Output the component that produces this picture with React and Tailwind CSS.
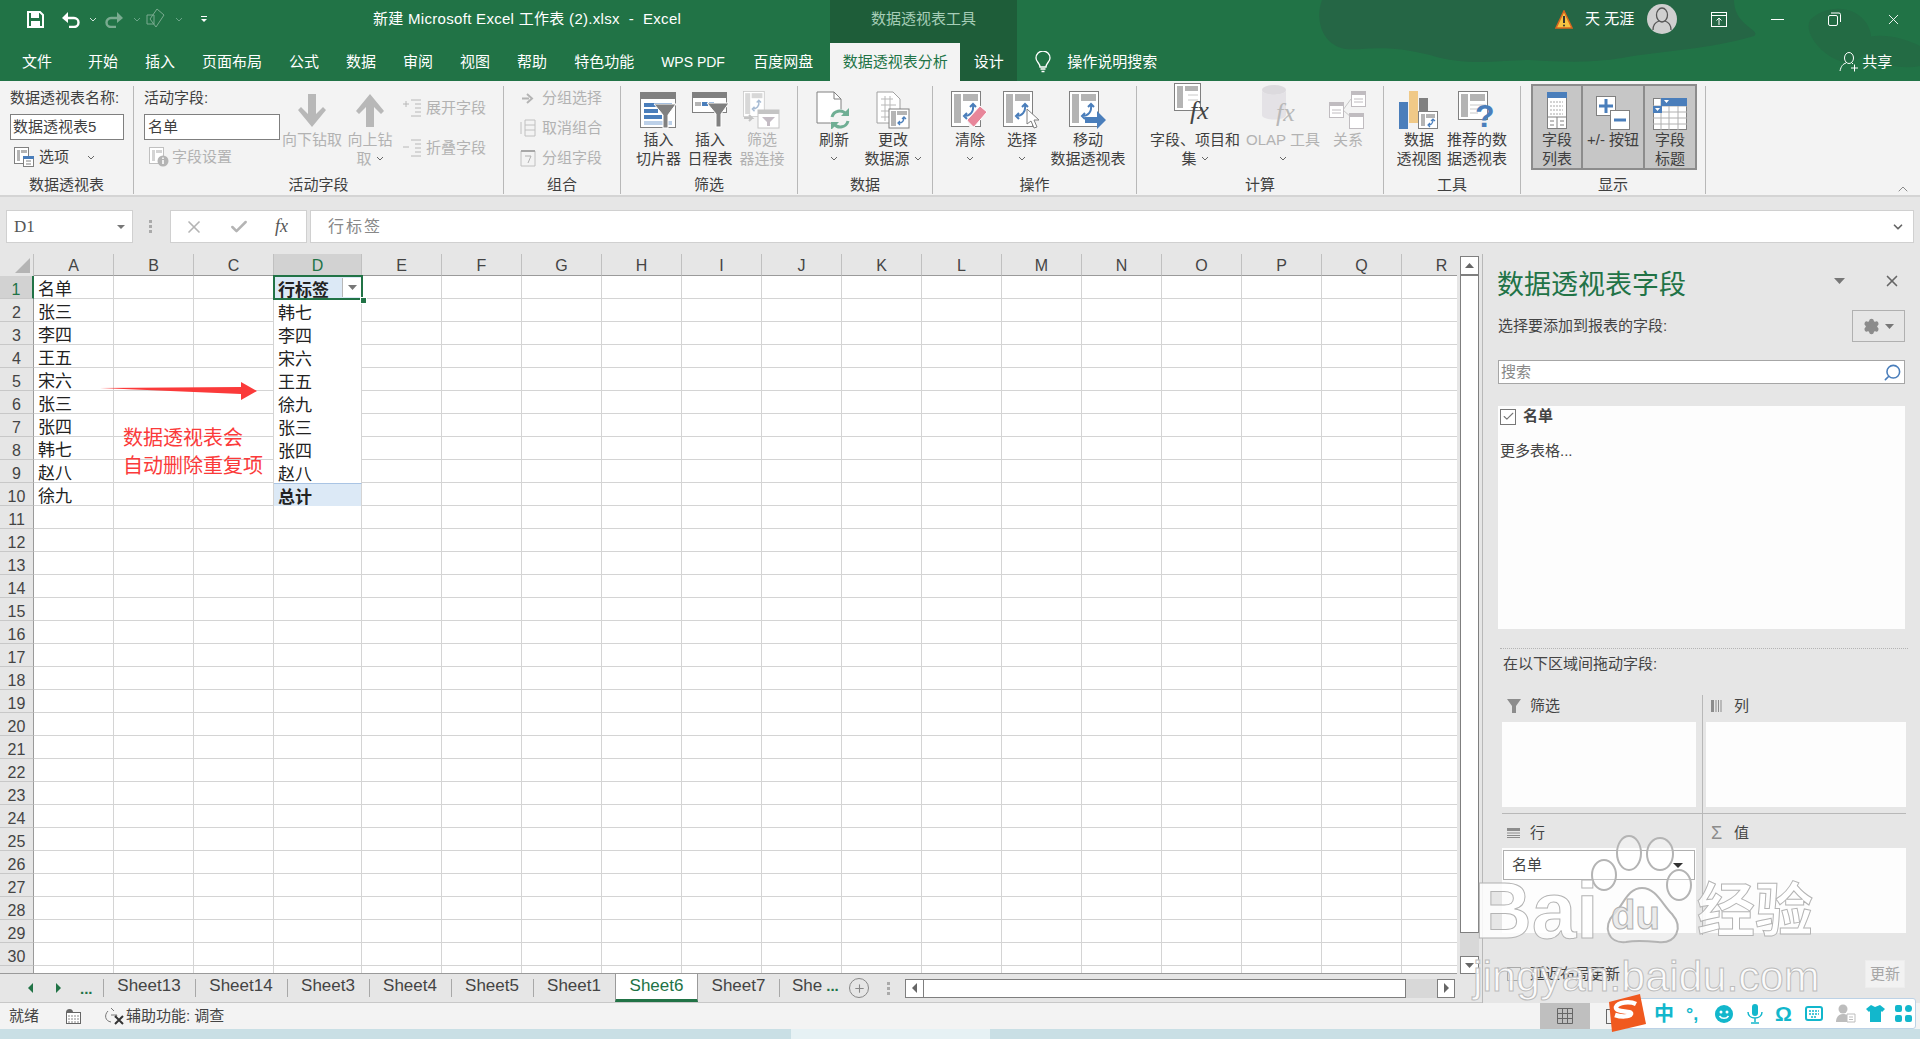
import React from 'react';
import { ChevronDown, ChevronUp, X, Check, Search, Settings, Plus } from 'lucide-react';

const Caret = ({ className = 'text-[#666]' }) => (
  <svg width="8" height="5" viewBox="0 0 8 5" className={className}>
    <path d="M1 1l3 3 3-3" fill="none" stroke="currentColor" strokeWidth="1" />
  </svg>
);

const Tri = ({ w = 10, h = 5, color = '#666' }) => (
  <svg width={w} height={h} viewBox="0 0 10 5" preserveAspectRatio="none">
    <path d="M0 0h10L5 5z" fill={color} />
  </svg>
);

// small pivot table sheet with blue arrows, used by several ribbon buttons
const PivotSheet = ({ dim }) => (
  <g>
    <rect x="0.5" y="0.5" width="29" height="35" fill="#fff" stroke={dim ? '#c4c4c4' : '#808080'} />
    <rect x="3" y="3" width="7" height="29" fill={dim ? '#d8d8d8' : '#b4b4b4'} />
    <rect x="12" y="3" width="15" height="7" fill={dim ? '#d8d8d8' : '#b4b4b4'} />
    <path d="M22 14c1 7-3 11-9 11M19 16l3-3 3 3M16 22l-3 3 3 3" fill="none" stroke={dim ? '#a8bcd4' : '#4a7ebb'} strokeWidth="2" />
  </g>
);

const Funnel = ({ x, y, color = '#808080' }) => (
  <path d={`M${x} ${y}h22l-8 11v13h-5v-13z`} fill={color} stroke="#fff" strokeWidth="1" />
);

const IconSlicer = () => (
  <svg width="37" height="37" viewBox="0 0 37 37">
    <rect x="0.5" y="0.5" width="35" height="35" fill="#fff" stroke="#808080" />
    <rect x="0" y="0" width="36" height="7" fill="#808080" />
    <rect x="4" y="11" width="28" height="4" fill="#4a7ebb" />
    <rect x="4" y="17" width="14" height="4" fill="#4a7ebb" />
    <rect x="4" y="23" width="18" height="4" fill="#4a7ebb" />
    <rect x="4" y="29" width="28" height="4" fill="#bcd0e8" />
    <Funnel x={14} y={12} />
  </svg>
);

const IconTimeline = () => (
  <svg width="37" height="37" viewBox="0 0 37 37">
    <rect x="0.5" y="0.5" width="34" height="20" fill="#fff" stroke="#808080" />
    <rect x="0" y="0" width="35" height="6" fill="#808080" />
    <rect x="3" y="10" width="6" height="4" fill="#b4b4b4" />
    <rect x="10" y="10" width="6" height="4" fill="#4a7ebb" />
    <rect x="17" y="10" width="5" height="4" fill="#4a7ebb" />
    <Funnel x={15} y={11} />
  </svg>
);

const IconConn = () => (
  <svg width="38" height="38" viewBox="0 0 38 38">
    <g transform="scale(.72)"><PivotSheet dim /></g>
    <rect x="15" y="19" width="21" height="18" fill="#fff" stroke="#c4c4c4" />
    <rect x="15" y="19" width="21" height="4" fill="#c4c4c4" />
    <path d="M19 26h13l-5 5v4h-3v-4z" fill="#c4bcc4" />
    <path d="M1 27h8l-3-3M9 27l-3 3" fill="none" stroke="#c4c4c4" strokeWidth="2" />
  </svg>
);

const IconRefresh = () => (
  <svg width="36" height="38" viewBox="0 0 36 38">
    <path d="M1 1h17l7 7v24H1z" fill="#fff" stroke="#808080" />
    <path d="M18 1v7h7" fill="none" stroke="#808080" />
    <circle cx="24" cy="28" r="10" fill="#f3f3f3" />
    <path d="M16 26a8 8 0 0 1 14-3M32 30a8 8 0 0 1-14 3" fill="none" stroke="#6fae94" strokeWidth="3" />
    <path d="M33 17v8h-8zM15 39v-8h8z" fill="#6fae94" />
  </svg>
);

const IconSource = () => (
  <svg width="34" height="38" viewBox="0 0 34 38">
    <path d="M1 1h16l7 7v24H1z" fill="#fff" stroke="#a0a0a0" />
    <path d="M5 8h12M5 14h15M5 20h15M5 26h15M9 5v25M14 5v25" stroke="#b8b8b8" fill="none" />
    <rect x="13" y="18" width="20" height="19" fill="#fff" stroke="#808080" />
    <rect x="15" y="20" width="5" height="15" fill="#b4b4b4" />
    <rect x="21" y="20" width="10" height="4" fill="#b4b4b4" />
    <path d="M28 26c0 4-2 6-5 6M26 28l2-2 2 2M24 30l-2 2 2 2" fill="none" stroke="#4a7ebb" strokeWidth="1.3" />
  </svg>
);

const IconClear = () => (
  <svg width="38" height="38" viewBox="0 0 38 38">
    <PivotSheet />
    <path d="M16 29l13-14 7 6-13 15h-4z" fill="#e8869a" stroke="#fff" />
    <path d="M16 29l7 7h-4z" fill="#f3f3f3" />
  </svg>
);

const IconSelect = () => (
  <svg width="38" height="38" viewBox="0 0 38 38">
    <PivotSheet />
    <path d="M24 18v15l4-3 3 7 3-1-3-7h5z" fill="#fff" stroke="#808080" />
  </svg>
);

const IconMove = () => (
  <svg width="38" height="38" viewBox="0 0 38 38">
    <PivotSheet />
    <path d="M16 26h12v-6l9 9-9 9v-6H16z" fill="#4a7ebb" />
  </svg>
);

const IconFx = () => (
  <svg width="42" height="46" viewBox="0 0 42 46">
    <rect x="0.5" y="0.5" width="26" height="27" fill="#fff" stroke="#808080" />
    <rect x="3" y="3" width="6" height="22" fill="#b4b4b4" />
    <rect x="11" y="3" width="13" height="5" fill="#b4b4b4" />
    <path d="M14 12h10M14 17h10" stroke="#c8c8c8" />
    <text x="16" y="36" fontFamily="'Liberation Serif',serif" fontStyle="italic" fontSize="26" fill="#444">fx</text>
  </svg>
);

const IconOlap = () => (
  <svg width="42" height="46" viewBox="0 0 42 46">
    <ellipse cx="12" cy="7" rx="12" ry="5" fill="#dcdade" />
    <path d="M0 7v25c0 6 24 6 24 0V7c0 6-24 6-24 0z" fill="#e4e2e6" />
    <text x="14" y="38" fontFamily="'Liberation Serif',serif" fontStyle="italic" fontSize="26" fill="#b8b8b8">fx</text>
  </svg>
);

const IconRel = () => (
  <svg width="38" height="38" viewBox="0 0 38 38">
    <path d="M14 19L22 8M14 19l9 8" stroke="#c8c8c8" fill="none" />
    <rect x="0.5" y="11.5" width="14" height="15" fill="#fff" stroke="#c0bcc0" />
    <rect x="0" y="11" width="15" height="4" fill="#c0bcc0" />
    <path d="M3 19h9M3 22h9" stroke="#c0bcc0" />
    <rect x="22.5" y="0.5" width="14" height="15" fill="#fff" stroke="#c0bcc0" />
    <rect x="22" y="0" width="15" height="4" fill="#c0bcc0" />
    <path d="M25 8h9M25 11h9" stroke="#c0bcc0" />
    <rect x="20.5" y="22.5" width="14" height="15" fill="#fff" stroke="#c0bcc0" />
    <rect x="20" y="22" width="15" height="4" fill="#c0bcc0" />
  </svg>
);

const IconChart = () => (
  <svg width="40" height="38" viewBox="0 0 40 38">
    <rect x="0" y="11" width="9" height="27" fill="#4a7ebb" />
    <rect x="10" y="0" width="9" height="32" fill="#f0c987" />
    <rect x="20" y="7" width="9" height="18" fill="#808080" />
    <rect x="19.5" y="20.5" width="19" height="17" fill="#fff" stroke="#808080" />
    <rect x="22" y="23" width="4" height="12" fill="#b4b4b4" />
    <rect x="27" y="23" width="9" height="4" fill="#b4b4b4" />
    <path d="M34 29c0 3-2 5-4 5M32 30l2-2 2 2M31 32l-2 2 2 2" fill="none" stroke="#4a7ebb" strokeWidth="1.2" />
  </svg>
);

const IconRec = () => (
  <svg width="38" height="38" viewBox="0 0 38 38">
    <rect x="0.5" y="0.5" width="29" height="28" fill="#fff" stroke="#808080" />
    <rect x="3" y="3" width="7" height="23" fill="#b4b4b4" />
    <rect x="12" y="3" width="15" height="7" fill="#b4b4b4" />
    <path d="M12 14h16M12 18h10M12 22h8" stroke="#c8c8c8" />
    <text x="17" y="36" fontFamily="'Liberation Sans',sans-serif" fontWeight="700" fontSize="32" fill="#4a7ebb">?</text>
  </svg>
);

const IconFieldList = () => (
  <svg width="20" height="38" viewBox="0 0 20 38">
    <rect x="0.5" y="0.5" width="19" height="36" fill="#fff" stroke="#808080" />
    <rect x="0" y="0" width="20" height="6" fill="#4a7ebb" />
    <path d="M3 10h13M3 14h13M3 18h13M3 22h13" stroke="#a8a8a8" strokeDasharray="2 1" />
    <path d="M0 25h20M10 25v12M3 29h4M3 33h4M13 29h4M13 33h4" stroke="#808080" />
  </svg>
);

const IconPlusMinus = () => (
  <svg width="34" height="34" viewBox="0 0 34 34">
    <rect x="0.5" y="0.5" width="19" height="19" fill="#fff" stroke="#808080" />
    <path d="M3 10h14M10 3v14" stroke="#4a7ebb" strokeWidth="3" />
    <rect x="14.5" y="14.5" width="19" height="19" fill="#fff" stroke="#808080" />
    <path d="M18 24h12" stroke="#4a7ebb" strokeWidth="3" />
  </svg>
);

const IconHeaders = () => (
  <svg width="34" height="32" viewBox="0 0 34 32">
    <rect x="0.5" y="0.5" width="33" height="31" fill="#fff" stroke="#808080" />
    <path d="M8 0v32M16 0v32M25 0v32M0 8h34M0 14h34M0 20h34M0 26h34" stroke="#b0b0b0" fill="none" />
    <rect x="8" y="0" width="26" height="8" fill="#4a7ebb" />
    <rect x="0" y="8" width="9" height="7" fill="#4a7ebb" />
    <path d="M11 2h5l-2.500 3zM2 10h5l-2.500 3z" fill="#fff" />
  </svg>
);

const RibbonBtn = ({ w, icon, lines, dim, caret, caretLine }) => (
  <div className={`${w} flex flex-col items-center ${dim ? 'text-[#b2b2b2]' : 'text-[#3f3f3f]'}`}>
    <div className="h-[44px] flex items-end justify-center shrink-0 pb-[1px]">{icon}</div>
    <div className="text-[15px] leading-[19px] text-center whitespace-nowrap">
      {lines.map((l, i) => (
        <div key={i} className="h-[19px] flex items-center justify-center gap-1">
          {l}
          {caret && i === lines.length - 1 && <Caret />}
        </div>
      ))}
      {caretLine && (
        <div className="h-[19px] flex items-center justify-center"><Caret /></div>
      )}
    </div>
  </div>
);

const Group = ({ w, label, children, className = '' }) => (
  <div className={`${w} my-[5px] h-[108px] border-r border-[#b8b8b8] flex flex-col shrink-0`}>
    <div className={`flex-1 flex ${className}`}>{children}</div>
    <div className="h-[20px] pt-[1px] text-center text-[15px] leading-[20px] text-[#3f3f3f]">{label}</div>
  </div>
);

const SmallRow = ({ icon, text, className = '' }) => (
  <div className={`flex items-center h-[20px] text-[15px] text-[#b2b2b2] ${className}`}>
    <span className="w-[29px] flex justify-center shrink-0">{icon}</span>
    {text}
  </div>
);

const tabs = ['开始', '插入', '页面布局', '公式', '数据', '审阅', '视图', '帮助', '特色功能'];

const TitleBar = () => (
  <div className="relative bg-[#217346] h-[81px] shrink-0 overflow-hidden text-white">
    <svg className="absolute left-0 top-0" width="1920" height="81" viewBox="0 0 1920 81">
      <path d="M1322 0c-8 22 2 46 24 49 18 2 36-6 84 6 38 12 72 5 100 5 34 2 60 3 92-2 44-8 84-8 132-22 8-6-20-10-20-36z" fill="#256645" />
      <path d="M1810 20c14-14 40-16 54 0 14 16 6 38-14 42-20 2-48-26-40-42zM1860 40c16-8 40-4 60 6v20c-30 6-72-12-60-26z" fill="#236b44" />
    </svg>
    <div className="relative flex h-[43px] items-center pb-[5px]">
      <div className="w-[373px] flex items-center shrink-0">
        <svg className="ml-[27px]" width="17" height="17" viewBox="0 0 17 17">
          <path d="M1 1h12l3 3v12H1z" fill="none" stroke="#fff" strokeWidth="2" />
          <rect x="4" y="1" width="8" height="6" fill="#fff" />
          <rect x="4" y="10" width="9" height="6" fill="#fff" />
        </svg>
        <svg className="ml-[17px]" width="19" height="17" viewBox="0 0 19 17">
          <path d="M6 7h7a4.500 4.500 0 0 1 0 9H8" fill="none" stroke="#fff" strokeWidth="2.400" />
          <path d="M7 1v11L1 7z" fill="#fff" />
        </svg>
        <Caret className="ml-[9px] text-[#cfe3d8]" />
        <svg className="ml-[8px] opacity-40" width="19" height="17" viewBox="0 0 19 17">
          <path d="M13 7H6a4.500 4.500 0 0 0 0 9h5" fill="none" stroke="#fff" strokeWidth="2.400" />
          <path d="M12 1v11l6-5z" fill="#fff" />
        </svg>
        <Caret className="ml-[9px] text-[#6aa588]" />
        <svg className="ml-[5px] opacity-40" width="20" height="24" viewBox="0 0 20 24">
          <path d="M1 8h7v9H1zM11 2l7 6-8 12-6-8z" fill="none" stroke="#fff" />
        </svg>
        <Caret className="ml-[9px] text-[#6aa588]" />
        <span className="ml-[18px] flex flex-col items-center gap-[2px]">
          <span className="w-[6px] h-px bg-white" />
          <Tri w={6} h={3} color="#fff" />
        </span>
      </div>
      <div className="w-[457px] text-[15px] tracking-[0.3px] whitespace-pre shrink-0">新建 Microsoft Excel 工作表 (2).xlsx  -  Excel</div>
      <div className="w-[187px] self-stretch -mb-[5px] pb-[5px] bg-[#1e5d39] flex items-center justify-center text-[15px] text-[#a6cdb7] shrink-0">数据透视表工具</div>
      <svg className="ml-[538px]" width="18" height="19" viewBox="0 0 18 19">
        <path d="M9 1l8 17H1z" fill="#f6c342" stroke="#d9661f" strokeWidth="1.500" />
        <path d="M9 6v7" stroke="#333" strokeWidth="2" />
        <circle cx="9" cy="15.500" r="1" fill="#333" />
      </svg>
      <span className="ml-[12px] text-[15px] whitespace-pre">天 无涯</span>
      <span className="ml-[13px] w-[30px] h-[30px] rounded-full bg-[#cfcfcf] flex items-center justify-center overflow-hidden">
        <svg width="22" height="24" viewBox="0 0 22 24">
          <ellipse cx="11" cy="8" rx="5.500" ry="7" fill="none" stroke="#555" strokeWidth="1.300" />
          <path d="M2 23c0-6 3-8 6-9M20 23c0-6-3-8-6-9" fill="none" stroke="#555" strokeWidth="1.300" />
        </svg>
      </span>
      <svg className="ml-[34px]" width="16" height="15" viewBox="0 0 16 15">
        <rect x="0.500" y="0.500" width="15" height="14" fill="none" stroke="#fff" />
        <path d="M0 3.500h16M8 13V6M5.500 8.500L8 6l2.500 2.500" fill="none" stroke="#fff" />
      </svg>
      <span className="ml-[44px] w-[13px] h-px bg-white" />
      <svg className="ml-[44px]" width="13" height="14" viewBox="0 0 13 14">
        <rect x="0.500" y="3.500" width="9" height="10" rx="1.500" fill="none" stroke="#fff" />
        <path d="M3 1h8a1.500 1.500 0 0 1 1.500 1.500V10" fill="none" stroke="#fff" />
      </svg>
      <X className="ml-[44px]" size={17} strokeWidth={1.3} />
    </div>
    <div className="relative flex h-[38px] items-stretch text-[15px]">
      <div className="ml-[22px] w-[30px] flex items-center mr-[36px]">文件</div>
      <div className="flex items-center gap-[27px] whitespace-nowrap">
        {tabs.map(t => <span key={t}>{t}</span>)}
        <span className="w-[65px] text-[14px]">WPS PDF</span>
        <span>百度网盘</span>
      </div>
      <div className="ml-[17px] w-[130px] bg-[#f3f3f3] text-[#217346] flex items-center justify-center">数据透视表分析</div>
      <div className="w-[57px] bg-[#1e5d39] flex items-center justify-center">设计</div>
      <svg className="ml-[18px] self-center" width="16" height="22" viewBox="0 0 16 22">
        <path d="M5 16c0-4-4-5-4-9a7 7 0 0 1 14 0c0 4-4 5-4 9z" fill="none" stroke="#fff" strokeWidth="1.300" />
        <path d="M5.500 18h5M6.500 20.500h3" stroke="#fff" strokeWidth="1.300" />
      </svg>
      <span className="ml-[16px] self-center">操作说明搜索</span>
      <svg className="ml-[682px] self-center" width="20" height="20" viewBox="0 0 20 20">
        <ellipse cx="10" cy="6" rx="4.500" ry="5.500" fill="none" stroke="#fff" />
        <path d="M1 19c1-5 3-7 6-8M13 11l1 1M12 16h7M15.500 12.500v7" fill="none" stroke="#fff" />
      </svg>
      <span className="ml-[3px] self-center">共享</span>
    </div>
  </div>
);

const Ribbon = () => (
  <div className="relative h-[116px] bg-[#f3f3f3] flex shrink-0 border-b-2 border-[#d4d4d4]">
    <Group w="w-[134px]" label="数据透视表">
      <div className="pl-[10px] text-[15px] text-[#3f3f3f] flex flex-col">
        <div className="h-[28px] leading-[24px] whitespace-nowrap">数据透视表名称:</div>
        <div className="w-[114px] h-[26px] border border-[#7f7f7f] bg-white pl-[2px] leading-[24px] whitespace-nowrap">数据透视表5</div>
        <div className="flex items-center mt-[7px] h-[20px]">
          <svg className="ml-[4px]" width="20" height="20" viewBox="0 0 20 20">
            <rect x="0.500" y="0.500" width="14" height="16" fill="#fff" stroke="#808080" />
            <rect x="3" y="3" width="3" height="11" fill="#b4b4b4" /><rect x="7" y="3" width="6" height="3" fill="#b4b4b4" />
            <rect x="9.500" y="9.500" width="10" height="10" fill="#fff" stroke="#808080" />
            <rect x="9" y="9" width="11" height="3" fill="#4a7ebb" />
            <path d="M12 14h5M12 17h5" stroke="#808080" />
          </svg>
          <span className="ml-[5px]">选项</span>
          <Caret className="ml-[18px] text-[#666]" />
        </div>
      </div>
    </Group>
    <Group w="w-[370px]" label="活动字段">
      <div className="pl-[10px] w-[148px] text-[15px] text-[#3f3f3f] flex flex-col shrink-0">
        <div className="h-[28px] leading-[24px]">活动字段:</div>
        <div className="w-[136px] h-[26px] border border-[#7f7f7f] bg-white pl-[3px] leading-[24px]">名单</div>
        <div className="flex items-center mt-[7px] h-[20px] text-[#b2b2b2]">
          <svg className="ml-[5px]" width="20" height="20" viewBox="0 0 20 20">
            <rect x="0.500" y="0.500" width="14" height="16" fill="#fff" stroke="#c0c0c0" />
            <rect x="3" y="3" width="3" height="11" fill="#d4d4d4" /><rect x="7" y="3" width="6" height="3" fill="#d4d4d4" />
            <circle cx="14" cy="14" r="5.500" fill="#b4b4b4" />
            <path d="M14 10.500v1.500M14 13v4" stroke="#fff" strokeWidth="1.500" />
          </svg>
          <span className="ml-[3px] whitespace-nowrap">字段设置</span>
        </div>
      </div>
      <RibbonBtn w="w-[60px]" dim lines={['向下钻取']} icon={
        <svg className="mb-[2px]" width="28" height="33" viewBox="0 0 28 33"><path d="M10 0h8v20l7-7 3 3-14 17L0 16l3-3 7 7z" fill="#b8b8b8" /></svg>
      } />
      <RibbonBtn w="w-[56px]" dim lines={['向上钻', '取']} caret icon={
        <svg className="mb-[2px]" width="28" height="33" viewBox="0 0 28 33"><path d="M10 33h8V13l7 7 3-3L14 0 0 17l3 3 7-7z" fill="#b8b8b8" /></svg>
      } />
      <div className="pl-[5px] pt-[12px] flex flex-col gap-[20px] text-[15px] text-[#b2b2b2]">
        <div className="flex items-center h-[20px] gap-[5px] whitespace-nowrap">
          <svg width="18" height="18" viewBox="0 0 18 18"><path d="M0 5h6M3 2v6M8 1h10M12 5h6M12 9h6M12 13h6M8 17h10" stroke="#b8b8b8" fill="none" /></svg>
          展开字段
        </div>
        <div className="flex items-center h-[20px] gap-[5px] whitespace-nowrap">
          <svg width="18" height="18" viewBox="0 0 18 18"><path d="M0 8h6M8 1h10M12 5h6M12 9h6M12 13h6M8 17h10" stroke="#b8b8b8" fill="none" /></svg>
          折叠字段
        </div>
      </div>
    </Group>
    <Group w="w-[117px]" label="组合">
      <div className="pl-[9px] pt-[2px] flex flex-col gap-[10px]">
        <SmallRow text="分组选择" icon={
          <svg width="12" height="11" viewBox="0 0 12 11"><path d="M0 5.500h7M5 1l5 4.500-5 4.500" fill="none" stroke="#b4b4b4" strokeWidth="2" /></svg>
        } />
        <SmallRow text="取消组合" icon={
          <svg width="16" height="18" viewBox="0 0 16 18"><path d="M1 3v12M5 1h10v16H5zM5 6h10M5 11h10" fill="none" stroke="#c0c0c0" /></svg>
        } />
        <SmallRow text="分组字段" icon={
          <svg width="16" height="18" viewBox="0 0 16 18"><path d="M1 2h14v15H1z" fill="none" stroke="#c0c0c0" /><path d="M1 2h14" stroke="#a8a8a8" strokeWidth="2" /><path d="M5 7h6l-3 7" fill="none" stroke="#b0b0b0" /></svg>
        } />
      </div>
    </Group>
    <Group w="w-[177px]" label="筛选" className="pl-[12px]">
      <RibbonBtn w="w-[51px]" lines={['插入', '切片器']} icon={<IconSlicer />} />
      <RibbonBtn w="w-[52px]" lines={['插入', '日程表']} icon={<IconTimeline />} />
      <RibbonBtn w="w-[52px]" dim lines={['筛选', '器连接']} icon={<IconConn />} />
    </Group>
    <Group w="w-[135px]" label="数据" className="pl-[12px]">
      <RibbonBtn w="w-[48px]" lines={['刷新']} caretLine icon={<IconRefresh />} />
      <RibbonBtn w="w-[70px]" lines={['更改', '数据源']} caret icon={<IconSource />} />
    </Group>
    <Group w="w-[204px]" label="操作" className="pl-[12px]">
      <RibbonBtn w="w-[50px]" lines={['清除']} caretLine icon={<IconClear />} />
      <RibbonBtn w="w-[54px]" lines={['选择']} caretLine icon={<IconSelect />} />
      <RibbonBtn w="w-[78px]" lines={['移动', '数据透视表']} icon={<IconMove />} />
    </Group>
    <Group w="w-[247px]" label="计算" className="pl-[8px]">
      <RibbonBtn w="w-[100px]" lines={['字段、项目和', '集']} caret icon={<IconFx />} />
      <RibbonBtn w="w-[76px]" dim lines={['OLAP 工具']} caretLine icon={<IconOlap />} />
      <RibbonBtn w="w-[54px]" dim lines={['关系']} icon={<IconRel />} />
    </Group>
    <Group w="w-[137px]" label="工具" className="pl-[8px]">
      <RibbonBtn w="w-[54px]" lines={['数据', '透视图']} icon={<IconChart />} />
      <RibbonBtn w="w-[62px]" lines={['推荐的数', '据透视表']} icon={<IconRec />} />
    </Group>
    <Group w="w-[185px]" label="显示">
      <div className="ml-[10px] -mt-[2px] h-[86px] flex border-2 border-[#8c8c8c] bg-[#c6c6c6] text-[#3f3f3f] text-[15px] leading-[19px]">
        <div className="w-[50px] border-r-2 border-[#8c8c8c] flex flex-col items-center">
          <div className="h-[44px] flex items-end"><IconFieldList /></div>
          <div className="text-center">字段<br />列表</div>
        </div>
        <div className="w-[62px] border-r-2 border-[#8c8c8c] flex flex-col items-center">
          <div className="h-[44px] flex items-end"><IconPlusMinus /></div>
          <div className="whitespace-nowrap">+/- 按钮</div>
        </div>
        <div className="w-[50px] flex flex-col items-center">
          <div className="h-[44px] flex items-end"><IconHeaders /></div>
          <div className="text-center">字段<br />标题</div>
        </div>
      </div>
    </Group>
    <ChevronUp className="absolute left-[1895px] top-[100px] text-[#555]" size={16} strokeWidth={1} />
  </div>
);

const FormulaBar = () => (
  <div className="h-[57px] bg-[#e6e6e6] flex items-start pt-[13px] shrink-0">
    <div className="ml-[6px] w-[127px] h-[33px] bg-white border border-[#d0d0d0] flex items-center justify-between px-[7px]">
      <span className="font-['Liberation_Serif',serif] text-[17px] text-[#555]">D1</span>
      <Tri w={8} h={4} color="#777" />
    </div>
    <div className="ml-[16px] w-[4px] h-[33px] flex flex-col justify-center gap-[2px]">
      <span className="w-[3px] h-[3px] bg-[#aaa]" /><span className="w-[3px] h-[3px] bg-[#aaa]" /><span className="w-[3px] h-[3px] bg-[#aaa]" />
    </div>
    <div className="ml-[17px] w-[137px] h-[33px] bg-white border border-[#d0d0d0] flex items-center">
      <X className="ml-[13px] text-[#b4b4b4]" size={20} strokeWidth={2} />
      <Check className="ml-[25px] text-[#b4b4b4]" size={20} strokeWidth={3} />
      <span className="ml-[26px] font-['Liberation_Serif',serif] italic text-[18px] text-[#555]">fx</span>
    </div>
    <div className="ml-[3px] w-[1604px] h-[33px] bg-white border border-[#d0d0d0] flex items-center justify-between pl-[17px] pr-[8px]">
      <span className="text-[16px] tracking-[2px] text-[#888]">行标签</span>
      <ChevronDown className="text-[#666]" size={14} strokeWidth={3} />
    </div>
  </div>
);

const colsList = 'ABCDEFGHIJKLMNOPQR'.split('');
const colA = ['名单', '张三', '李四', '王五', '宋六', '张三', '张四', '韩七', '赵八', '徐九'];
const colD = ['行标签', '韩七', '李四', '宋六', '王五', '徐九', '张三', '张四', '赵八', '总计'];
const rowNums = Array.from({ length: 31 }, (_, i) => i + 1);

const Sheet = () => (
  <div className="relative w-[1457px] h-[720px] overflow-hidden border-b border-[#9a9a9a] bg-white">
    <div className="flex h-[22px] bg-[#e6e6e6] text-[16px] text-[#444]">
      <div className="w-[34px] shrink-0 border-r border-[#c0c0c0] relative">
        <svg className="absolute right-[3px] bottom-[3px]" width="15" height="15" viewBox="0 0 15 15"><path d="M15 0v15H0z" fill="#b4b4b4" /></svg>
      </div>
      {colsList.map(c => (
        <div key={c} className={`${c === 'D' ? 'w-[88px] bg-[#d2d2d2] text-[#217346]' : 'w-[80px]'} shrink-0 border-r border-[#c0c0c0] border-b border-b-[#9a9a9a] pt-[2px] flex items-center justify-center`}>{c}</div>
      ))}
    </div>
    {rowNums.map(r => (
      <div key={r} className="flex h-[23px] text-[17px] text-[#222]">
        <div className={`w-[34px] shrink-0 flex items-center justify-center text-[16px] pt-[5px] border-b ${r === 1 ? 'bg-[#d2d2d2] text-[#217346] border-r-2 border-r-[#217346] border-b-[#c8c8c8]' : 'bg-[#e6e6e6] text-[#444] border-r border-r-[#9a9a9a] border-b-[#c8c8c8]'}`}>{r}</div>
        {colsList.map(c => {
          if (c === 'D') {
            const v = colD[r - 1];
            if (r === 1) {
              return (
                <div key={c} className="w-[88px] shrink-0 bg-[#dce9f6] flex items-center pl-[4px] pt-[6px] font-semibold relative">
                  {v}
                  <span className="absolute left-[68px] top-[2px] w-[19px] h-[19px] bg-white border-l border-[#b8b8b8] flex items-center justify-center"><Tri w={9} h={5} color="#777" /></span>
                </div>
              );
            }
            if (r === 10) {
              return <div key={c} className="w-[88px] shrink-0 bg-[#dce9f6] border-t border-t-[#a9c4e4] border-r border-r-[#d4d4d4] flex items-center pl-[4px] pt-[5px] font-bold">{v}</div>;
            }
            return (
              <div key={c} className={`w-[88px] shrink-0 border-r border-[#d4d4d4] flex items-center pl-[4px] pt-[6px] ${r > 10 ? 'border-b' : ''}`}>{v}</div>
            );
          }
          return (
            <div key={c} className="w-[80px] shrink-0 border-r border-b border-[#d4d4d4] flex items-center pl-[4px] pt-[6px]">
              {c === 'A' ? colA[r - 1] : ''}
            </div>
          );
        })}
      </div>
    ))}
    {/* selected cell */}
    <div className="absolute left-[273px] top-[21px] w-[90px] h-[25px] border-2 border-[#217346]" />
    <div className="absolute left-[360px] top-[43px] w-[5px] h-[5px] bg-[#217346] border border-white box-content" />
    {/* annotation */}
    <svg className="absolute left-0 top-0" width="300" height="160" viewBox="0 0 300 160">
      <path d="M100 134l141-1v-5l16 9-16 9v-6z" fill="#fb3a3a" />
    </svg>
    <div className="absolute left-[123px] top-[170px] text-[20px] leading-[28px] text-[#fb3a3a] whitespace-nowrap">数据透视表会<br />自动删除重复项</div>
  </div>
);

const VScroll = () => (
  <div className="ml-[3px] w-[19px] h-[720px] flex flex-col">
    <div className="mt-[2px] h-[20px] bg-white border border-[#7f7f7f] border-b-2 flex items-center justify-center"><span className="rotate-180 flex"><Tri w={9} h={5} /></span></div>
    <div className="h-[657px] bg-white border-x border-b border-[#7f7f7f]" />
    <div className="h-[23px] bg-[#d8d8d8]" />
    <div className="h-[18px] bg-white border border-[#7f7f7f] flex items-center justify-center"><Tri w={9} h={5} /></div>
  </div>
);

const sheetTabs = [
  ['Sheet13', 'w-[92px]'], ['Sheet14', 'w-[92px]'], ['Sheet3', 'w-[82px]'], ['Sheet4', 'w-[82px]'],
  ['Sheet5', 'w-[82px]'], ['Sheet1', 'w-[82px]'],
];

const SheetTabs = () => (
  <div className="h-[29px] bg-[#e6e6e6] flex items-stretch text-[17px] text-[#444] border-b border-[#c8c8c8]">
    <div className="w-[103px] shrink-0 flex items-center relative">
      <span className="ml-[28px] w-0 h-0 border-y-[5px] border-y-transparent border-r-[5px] border-r-[#217346]" />
      <span className="ml-[23px] w-0 h-0 border-y-[5px] border-y-transparent border-l-[5px] border-l-[#217346]" />
      <span className="ml-[19px] text-[#217346] text-[15px] font-bold leading-none">...</span>
    </div>
    {sheetTabs.map(([t, w]) => (
      <div key={t} className={`${w} shrink-0 flex items-center justify-center relative pb-[5px]`}>
        <span className="absolute left-0 top-[5px] h-[18px] w-px bg-[#a8a8a8]" />
        {t}
      </div>
    ))}
    <div className="w-[83px] shrink-0 bg-white border-x border-[#9a9a9a] border-b-[3px] border-b-[#217346] text-[#217346] pb-[2px] flex items-center justify-center">Sheet6</div>
    <div className="w-[81px] shrink-0 flex items-center justify-center pb-[5px]">Sheet7</div>
    <div className="w-[60px] shrink-0 flex items-center relative pl-[13px] pb-[5px] whitespace-nowrap">
      <span className="absolute left-0 top-[5px] h-[18px] w-px bg-[#a8a8a8]" />
      She
      <span className="ml-[4px] text-[#217346] text-[15px] font-bold leading-none">...</span>
    </div>
    <div className="ml-[10px] self-center w-[20px] h-[20px] rounded-full border border-[#888] flex items-center justify-center shrink-0"><Plus size={13} className="text-[#888]" /></div>
    <div className="ml-[18px] w-[4px] self-center flex flex-col gap-[2px]">
      <span className="w-[3px] h-[3px] bg-[#aaa]" /><span className="w-[3px] h-[3px] bg-[#aaa]" /><span className="w-[3px] h-[3px] bg-[#aaa]" />
    </div>
    <div className="ml-[14px] self-center flex h-[19px] w-[550px] shrink-0">
      <div className="w-[19px] bg-white border border-[#7f7f7f] flex items-center justify-center">
        <span className="w-0 h-0 border-y-[5px] border-y-transparent border-r-[5px] border-r-[#666]" />
      </div>
      <div className="w-[482px] bg-white border-y border-r border-[#7f7f7f]" />
      <div className="w-[31px] bg-[#d8d8d8]" />
      <div className="w-[18px] bg-white border border-[#7f7f7f] flex items-center justify-center">
        <span className="w-0 h-0 border-y-[5px] border-y-transparent border-l-[5px] border-l-[#666]" />
      </div>
    </div>
  </div>
);

const AreaHead = ({ icon, text, className = '' }) => (
  <div className={`h-[24px] flex items-center text-[15px] text-[#444] ${className}`}>
    <span className="w-[28px] flex justify-start pl-[5px] shrink-0">{icon}</span>{text}
  </div>
);

const FieldPanel = () => (
  <div className="w-[438px] h-[749px] bg-[#e6e6e6] border-l border-[#b8b8b8] text-[#444] pl-[15px] flex flex-col shrink-0 -ml-[1px]">
    <div className="h-[16px] shrink-0" />
    <div className="flex items-center h-[30px]">
      <span className="w-[337px] -ml-[1px] text-[27px] leading-[30px] text-[#217346]">数据透视表字段</span>
      <span className="flex -mt-[8px]"><Tri w={11} h={6} color="#777" /></span>
      <X className="ml-[38px] -mt-[8px] text-[#666]" size={18} strokeWidth={2.2} />
    </div>
    <div className="flex items-center h-[32px] mt-[10px] w-[407px] justify-between text-[15px]">
      <span>选择要添加到报表的字段:</span>
      <div className="w-[53px] h-[32px] border border-[#b0b0b0] flex items-center justify-center gap-[5px]">
        <Settings size={17} className="text-[#8c8c8c] fill-[#8c8c8c]" />
        <Tri w={9} h={5} color="#777" />
      </div>
    </div>
    <div className="mt-[18px] w-[407px] h-[24px] bg-white border border-[#a6a6a6] flex items-center justify-between px-[2px] text-[15px] text-[#888]">
      搜索
      <Search size={19} strokeWidth={2} className="text-[#4a7ebb] -scale-x-100" />
    </div>
    <div className="mt-[22px] w-[407px] h-[223px] bg-[#fdfdfd] px-[2px] text-[15px]">
      <div className="flex items-center h-[19px] mt-[1px] font-semibold text-[#444]">
        <span className="w-[16px] h-[16px] border border-[#777] bg-white flex items-center justify-center"><Check size={13} className="text-[#777]" /></span>
        <span className="ml-[7px]">名单</span>
      </div>
      <div className="mt-[14px] leading-[22px]">更多表格...</div>
    </div>
    <div className="mt-[19px] w-[408px] ml-[2px] border-t border-dotted border-[#b4b4b4]" />
    <div className="ml-[5px] mt-[5px] h-[20px] text-[15px] leading-[20px]">在以下区域间拖动字段:</div>
    <div className="mt-[21px] ml-[4px] w-[404px] grid grid-cols-[201px_203px] grid-rows-[119px_121px]">
      <div className="border-r border-b border-[#b8b8b8] pr-[6px]">
        <AreaHead text="筛选" icon={<svg width="14" height="14" viewBox="0 0 14 14"><path d="M0 0h14L9 7v7H5V7z" fill="#8c8c8c" /></svg>} className="mt-[-1px]" />
        <div className="mt-[4px] h-[85px] bg-[#fdfdfd]" />
      </div>
      <div className="border-b border-[#b8b8b8] pl-[3px]">
        <AreaHead text="列" icon={<svg width="11" height="12" viewBox="0 0 11 12"><path d="M0 0h3v12H0zM4.500 0h1v12h-1zM7 0h1v12H7zM9.500 0h1v12h-1z" fill="#8c8c8c" /></svg>} className="mt-[-1px]" />
        <div className="mt-[4px] h-[85px] bg-[#fdfdfd]" />
      </div>
      <div className="border-r border-[#b8b8b8] pr-[6px]">
        <AreaHead text="行" icon={<svg width="13" height="10" viewBox="0 0 13 10"><path d="M0 0h13v3H0zM0 4.500h13v1H0zM0 7h13v1H0zM0 9h13v1H0z" fill="#8c8c8c" /></svg>} className="mt-[7px]" />
        <div className="mt-[3px] h-[85px] bg-[#fdfdfd] pt-[2px]">
          <div className="mx-[1px] h-[30px] bg-white border border-[#b0b0b0] flex items-center justify-between pl-[8px] pr-[11px] text-[15px]">
            名单<Tri w={10} h={5} color="#333" />
          </div>
        </div>
      </div>
      <div className="pl-[3px]">
        <AreaHead text="值" icon={<span className="text-[18px] leading-none text-[#8c8c8c]">Σ</span>} className="mt-[7px]" />
        <div className="mt-[3px] h-[85px] bg-[#fdfdfd]" />
      </div>
    </div>
    <div className="mt-[25px] ml-[9px] w-[398px] flex items-center justify-between text-[15px]">
      <div className="flex items-center">
        <span className="w-[14px] h-[14px] border border-[#aaa] bg-[#e6e6e6]" />
        <span className="ml-[9px]">延迟布局更新</span>
      </div>
      <div className="w-[40px] h-[28px] bg-[#f2f2f2] border border-[#ededed] flex items-center justify-center text-[#a6a6a6]">更新</div>
    </div>
  </div>
);

const StatusBar = () => (
  <div className="h-[26px] bg-[#f3f3f3] flex items-center text-[15px] text-[#444] shrink-0">
    <span className="ml-[9px] w-[30px] shrink-0">就绪</span>
    <svg className="ml-[27px] shrink-0" width="15" height="15" viewBox="0 0 15 15">
      <circle cx="3.500" cy="3.500" r="3.500" fill="#666" />
      <rect x="0.500" y="3.500" width="14" height="11" fill="#fff" stroke="#666" />
      <path d="M2 7h11M2 10h11M2 13h11" stroke="#888" strokeDasharray="2 1" />
    </svg>
    <svg className="ml-[23px] shrink-0" width="21" height="18" viewBox="0 0 21 18">
      <path d="M4 4c-4 4-3 10 3 11M7 1l3 3M7 8h6l-2 3" fill="none" stroke="#777" />
      <path d="M11 9l8 8M19 9l-8 8" stroke="#333" strokeWidth="2" />
    </svg>
    <span className="ml-[1px] w-[98px] shrink-0 whitespace-nowrap">辅助功能: 调查</span>
    <div className="ml-[1316px] w-[50px] h-[26px] bg-[#bfbfbf] flex items-center justify-center shrink-0">
      <svg width="16" height="16" viewBox="0 0 16 16"><path d="M.5.500h15v15H.500zM5.500 0v16M10.500 0v16M0 5.500h16M0 10.500h16" fill="none" stroke="#666" /></svg>
    </div>
    <span className="ml-[16px] w-[16px] h-[15px] border border-[#666] shrink-0" />
  </div>
);

const Watermark = () => (
  <>
    <svg className="absolute left-[1590px] top-[830px]" width="110" height="120" viewBox="0 0 110 120">
      <g fill="#fff" fillOpacity=".35" stroke="#b4b4b4" strokeWidth="2">
        <ellipse cx="39" cy="23" rx="12" ry="17" />
        <ellipse cx="70" cy="24" rx="13" ry="16" />
        <ellipse cx="14" cy="45" rx="12" ry="15" />
        <ellipse cx="89" cy="55" rx="12" ry="15" />
        <path d="M52 58c14 0 20 16 30 26 12 14 4 30-14 28-10-1-22-2-32 0-18 2-24-16-12-28 10-10 14-26 28-26z" />
      </g>
    </svg>
    <div className="absolute left-[1474px] top-[866px] text-[80px] leading-[90px] font-bold text-white/85 [-webkit-text-stroke:1px_#b4b4b4]">Bai</div>
    <div className="absolute left-[1611px] top-[893px] text-[40px] leading-[44px] font-bold text-[#e6e6e6]/80 [-webkit-text-stroke:1px_#b0b0b0]">du</div>
    <div className="absolute left-[1697px] top-[876px] text-[58px] leading-[70px] font-bold text-white/85 [-webkit-text-stroke:1px_#b4b4b4] whitespace-nowrap">经验</div>
    <div className="absolute left-[1473px] top-[950px] text-[43px] leading-[52px] text-white/85 [-webkit-text-stroke:1px_#bcbcbc] whitespace-nowrap">jingyan.baidu.com</div>
  </>
);

const ImeBar = () => (
  <div className="absolute left-[1624px] top-[998px] w-[292px] h-[31px] bg-white border border-[#bcd2e6] rounded-[3px] flex items-center text-[#12b7cc]">
    <svg className="absolute -left-[19px] -top-[5px]" width="40" height="38" viewBox="0 0 40 38">
      <path d="M3 8l31-8 6 30-34 8z" fill="#f0591f" />
      <path d="M30 10c-6-3-18-2-20 3-1 6 16 3 15 7-1 3-10 3-16 1" fill="none" stroke="#fff" strokeWidth="4.500" />
    </svg>
    <span className="ml-[29px] w-[26px] text-[20px] font-bold leading-none">中</span>
    <span className="ml-[6px] w-[28px] text-[18px] font-bold leading-none">°,</span>
    <svg className="ml-[1px]" width="18" height="18" viewBox="0 0 18 18"><circle cx="9" cy="9" r="9" fill="#12b7cc" /><circle cx="6" cy="7" r="1.500" fill="#fff" /><circle cx="12" cy="7" r="1.500" fill="#fff" /><path d="M4.500 11c2 3 7 3 9 0" fill="none" stroke="#fff" strokeWidth="1.500" /></svg>
    <svg className="ml-[14px]" width="16" height="20" viewBox="0 0 16 20"><rect x="5" y="0" width="6" height="12" rx="3" fill="#12b7cc" /><path d="M1 8c0 8 14 8 14 0M8 14v4M4 19h8" fill="none" stroke="#12b7cc" strokeWidth="1.500" /></svg>
    <span className="ml-[12px] w-[20px] text-[21px] font-bold leading-none">Ω</span>
    <svg className="ml-[10px]" width="18" height="15" viewBox="0 0 18 15"><rect x="1" y="1" width="16" height="13" rx="2" fill="none" stroke="#12b7cc" strokeWidth="2" /><path d="M4 5h10M4 8h10M6 11h6" stroke="#12b7cc" strokeWidth="1.500" strokeDasharray="2 1" /></svg>
    <svg className="ml-[13px]" width="20" height="19" viewBox="0 0 20 19"><circle cx="7" cy="5" r="4.500" fill="#bdbdbd" /><path d="M0 18c0-5 3-8 7-8 2 0 3 .5 4 1v7z" fill="#bdbdbd" /><path d="M11 10h8v8h-8zM13 13h4M13 15.500h4" fill="none" stroke="#bdbdbd" /></svg>
    <svg className="ml-[10px]" width="19" height="17" viewBox="0 0 19 17"><path d="M5 0l4 2 5-2 5 4-3 3-1-1v11H4V6L3 7 0 4z" fill="#12b7cc" /></svg>
    <svg className="ml-[10px]" width="17" height="17" viewBox="0 0 17 17"><rect width="7" height="7" rx="2" fill="#12b7cc" /><rect x="10" width="7" height="7" rx="3.500" fill="#12b7cc" /><rect y="10" width="7" height="7" rx="2" fill="#12b7cc" /><rect x="10" y="10" width="7" height="7" rx="2" fill="#12b7cc" /></svg>
  </div>
);

export default function App() {
  return (
    <div className="relative w-[1920px] h-[1039px] overflow-hidden flex flex-col bg-[#e6e6e6] font-['Liberation_Sans','Noto_Sans_CJK_SC',sans-serif]">
      <TitleBar />
      <Ribbon />
      <FormulaBar />
      <div className="flex h-[749px] shrink-0">
        <div className="w-[1483px] shrink-0 flex flex-col">
          <div className="flex h-[720px]">
            <Sheet />
            <VScroll />
          </div>
          <SheetTabs />
        </div>
        <FieldPanel />
      </div>
      <StatusBar />
      <div className="h-[10px] bg-[#c9dfe5] flex shrink-0">
        <div className="ml-[791px] w-[199px] bg-[#e6f1f4]" />
      </div>
      <Watermark />
      <ImeBar />
    </div>
  );
}
